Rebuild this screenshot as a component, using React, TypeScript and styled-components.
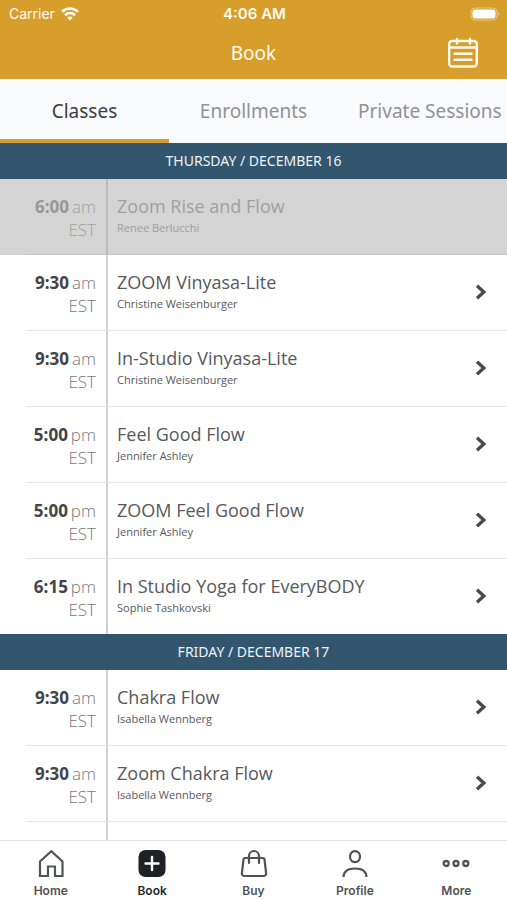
import React from "react";
import styled, { createGlobalStyle } from "styled-components";

const GlobalStyle = createGlobalStyle`
  *, *::before, *::after { box-sizing: border-box; }
  body { margin: 0; background: #fff; font-family: "Open Sans", "Noto Sans", sans-serif; }
  button { font: inherit; color: inherit; background: none; border: 0; padding: 0; cursor: pointer; }
  h1, h2, h3, p, ul { margin: 0; padding: 0; font-weight: 400; list-style: none; }
`;

const Screen = styled.div`
  display: flex;
  flex-direction: column;
  height: 100vh;
  overflow: hidden;
`;

const Header = styled.header`
  flex: none;
  background: #d89e2b;
  color: #fffaf0;
`;

const StatusBar = styled.div`
  display: grid;
  grid-template-columns: 1fr auto 1fr;
  align-items: center;
  height: 27px;
  padding: 0 7px 0 9px;
  font: 400 14px/20px Inter, "Liberation Sans", sans-serif;
`;

const Carrier = styled.span`
  display: flex;
  align-items: center;
  gap: 6px;
`;

const Clock = styled.span`
  font-size: 15px;
  font-weight: 600;
`;

const Battery = styled.svg`
  justify-self: end;
`;

const TitleBar = styled.div`
  display: grid;
  grid-template-columns: 1fr auto 1fr;
  align-items: center;
  height: 52px;
  padding: 0 28px;
`;

const Title = styled.h1`
  grid-column: 2;
  font-family: "Noto Sans", "Open Sans", sans-serif;
  font-size: 19px;
  line-height: 26px;
`;

const CalendarButton = styled.button`
  justify-self: end;
  display: flex;
`;

const Tabs = styled.div`
  flex: none;
  display: flex;
  overflow: hidden;
  background: #f9fafc;
`;

const Tab = styled.button<{ $active: boolean }>`
  && {
    flex: none;
    min-width: calc(100% / 3);
    height: 64px;
    padding: 4px 20px 0;
    border-bottom: 4px solid ${(p) => (p.$active ? "#d89e2b" : "transparent")};
    color: ${(p) => (p.$active ? "#3c3d40" : "#909297")};
    font-family: "Noto Sans", "Open Sans", sans-serif;
    font-size: 19px;
    line-height: 26px;
    white-space: nowrap;
  }
`;

const Schedule = styled.main`
  flex: 1;
  min-height: 0;
  overflow-y: auto;
  scrollbar-width: none;
`;

const DayHeading = styled.h2`
  display: flex;
  align-items: center;
  justify-content: center;
  height: 36px;
  background: #33566f;
  color: #edf3f8;
  font-family: "Noto Sans", "Open Sans", sans-serif;
  font-size: 14px;
  line-height: 20px;
  text-transform: uppercase;
`;

const ClassItem = styled.li<{ $past: boolean }>`
  padding-left: 26px;
  background: ${(p) => (p.$past ? "#d4d4d4" : "#fff")};
  color: ${(p) => (p.$past ? "#a0a0a0" : "#58595c")};
`;

const ClassButton = styled.button<{ $last: boolean }>`
  && {
    display: flex;
    width: 100%;
    height: ${(p) => (p.$last ? 75 : 76)}px;
    border-bottom: ${(p) => (p.$last ? 0 : 1)}px solid #e6e6e8;
    text-align: left;
  }
  &&:disabled { border-color: #c8c8c8; cursor: default; }
`;

const Time = styled.span<{ $past: boolean }>`
  flex: none;
  width: 82px;
  align-self: stretch;
  padding: 16px 10px 0 0;
  border-right: 2px solid ${(p) => (p.$past ? "#bcbcbc" : "#d0d0d2")};
  color: ${(p) => (p.$past ? "#a0a0a0" : "#77787b")};
  font-size: 17px;
  font-weight: 300;
  line-height: 23px;
  text-align: right;
`;

const Hour = styled.strong<{ $past: boolean }>`
  margin-right: 3px;
  color: ${(p) => (p.$past ? "#989898" : "#434447")};
  font-weight: 700;
`;

const Info = styled.span`
  flex: 1;
  min-width: 0;
  display: flex;
  flex-direction: column;
  padding: 15px 9px 0;
`;

const ClassName = styled.span`
  font-size: 18px;
  line-height: 25px;
`;

const Teacher = styled.span`
  font-size: 11px;
  line-height: 18px;
`;

const Chevron = styled.svg`
  flex: none;
  align-self: center;
  margin: 0 20px 2px 0;
`;

const NavBar = styled.nav`
  flex: none;
  display: flex;
  height: 60px;
  border-top: 1px solid #e2e3e5;
  background: #fff;
`;

const NavButton = styled.button<{ $active: boolean }>`
  && {
    flex: 1;
    display: flex;
    flex-direction: column;
    align-items: center;
    gap: 5px;
    padding-top: 7px;
    color: ${(p) => (p.$active ? "#26282c" : "#505256")};
    font: 600 12px/16px Inter, "Liberation Sans", sans-serif;
  }
`;

type Session = { hour: string; half: "am" | "pm"; name: string; teacher: string; past?: boolean };

const days: { date: string; sessions: Session[] }[] = [
  {
    date: "Thursday / December 16",
    sessions: [
      { hour: "6:00", half: "am", name: "Zoom Rise and Flow", teacher: "Renee Berlucchi", past: true },
      { hour: "9:30", half: "am", name: "ZOOM Vinyasa-Lite", teacher: "Christine Weisenburger" },
      { hour: "9:30", half: "am", name: "In-Studio Vinyasa-Lite", teacher: "Christine Weisenburger" },
      { hour: "5:00", half: "pm", name: "Feel Good Flow", teacher: "Jennifer Ashley" },
      { hour: "5:00", half: "pm", name: "ZOOM Feel Good Flow", teacher: "Jennifer Ashley" },
      { hour: "6:15", half: "pm", name: "In Studio Yoga for EveryBODY", teacher: "Sophie Tashkovski" },
    ],
  },
  {
    date: "Friday / December 17",
    sessions: [
      { hour: "9:30", half: "am", name: "Chakra Flow", teacher: "Isabella Wennberg" },
      { hour: "9:30", half: "am", name: "Zoom Chakra Flow", teacher: "Isabella Wennberg" },
    ],
  },
];

const tabs = ["Classes", "Enrollments", "Private Sessions"];

const stroke = { fill: "none", stroke: "currentColor", strokeWidth: 2.2, strokeLinejoin: "round", strokeLinecap: "round" } as const;

const navItems: { label: string; icon: React.ReactNode }[] = [
  {
    label: "Home",
    icon: <path {...stroke} strokeLinejoin="miter" strokeLinecap="butt" d="M4 13.500 15.300 3.200 26.500 13.500V28H19V18.500H12V28H4Z" />,
  },
  {
    label: "Book",
    icon: (
      <>
        <rect x="1.5" y="2" width="27" height="27" rx="7" fill="#1f2126" />
        <path d="M15 9v13M8.500 15.500h13" stroke="#fff" strokeWidth="2.400" strokeLinecap="round" />
      </>
    ),
  },
  {
    label: "Buy",
    icon: (
      <path {...stroke} d="M6 10h18a1.500 1.500 0 0 1 1.500 1.300l1.600 13.700a2.500 2.500 0 0 1-2.500 3H5.400a2.500 2.500 0 0 1-2.500-3l1.600-13.700A1.500 1.500 0 0 1 6 10ZM10 15V8a5 5 0 0 1 10 0v7" />
    ),
  },
  {
    label: "Profile",
    icon: <path {...stroke} strokeLinecap="butt" d="M15 3.200c3 0 5 2.300 5 5.400s-2 5.600-5 5.600-5-2.500-5-5.600 2-5.400 5-5.400ZM3.500 29c.3-5.500 4.500-8.500 11.500-8.500S26.200 23.500 26.500 29" />,
  },
  {
    label: "More",
    icon: (
      <g fill="none" stroke="currentColor" strokeWidth="2.300">
        <circle cx="5.200" cy="15.500" r="2.500" />
        <circle cx="15" cy="15.500" r="2.500" />
        <circle cx="24.800" cy="15.500" r="2.500" />
      </g>
    ),
  },
];

export default function App() {
  return (
    <>
      <GlobalStyle />
      <Screen>
        <Header>
          <StatusBar>
            <Carrier>
              Carrier
              <svg width="18" height="14" viewBox="0 0 18 14" fill="none" stroke="#fffdf8" strokeWidth="2.6" aria-hidden="true">
                <path d="M1 4.800C5.600.3 12.400.3 17 4.800" />
                <path d="M4 8.200c2.900-2.800 7.100-2.800 10 0" />
                <path d="M9 13.500 6.200 10.700c1.700-1.500 3.900-1.500 5.600 0Z" fill="#fffdf8" stroke="none" />
              </svg>
            </Carrier>
            <Clock>4:06 AM</Clock>
            <Battery width="30" height="14" viewBox="0 0 30 14" aria-hidden="true">
              <rect x="1" y="1" width="26" height="12" rx="4" fill="none" stroke="#e8c684" />
              <rect x="2.500" y="2.500" width="23" height="9" rx="2.500" fill="#fff" />
              <path d="M28.500 5v4c1.300-.8 1.300-3.200 0-4Z" fill="#ecd09a" />
            </Battery>
          </StatusBar>
          <TitleBar>
            <Title>Book</Title>
            <CalendarButton aria-label="Choose a date">
              <svg width="32" height="32" viewBox="0 0 32 32" fill="none" stroke="#fffaf0" strokeWidth="2.400" strokeLinecap="round" aria-hidden="true">
                <rect x="2.200" y="4" width="27.600" height="25.500" rx="3" />
                <path d="M2 10.500h28M7.500 16.800h17M7.500 22.800h17" />
                <path d="M10 2v4.500M23 2v4.500" />
              </svg>
            </CalendarButton>
          </TitleBar>
        </Header>
        <Tabs role="tablist">
          {tabs.map((label, i) => (
            <Tab key={label} role="tab" aria-selected={i === 0} $active={i === 0}>
              {label}
            </Tab>
          ))}
        </Tabs>
        <Schedule>
          {days.map((day, d) => (
            <section key={day.date}>
              <DayHeading>{day.date}</DayHeading>
              <ul>
                {day.sessions.map((s, i) => {
                  const past = !!s.past;
                  return (
                    <ClassItem key={i} $past={past}>
                      <ClassButton disabled={past} $last={d < days.length - 1 && i === day.sessions.length - 1}>
                        <Time $past={past}>
                          <Hour $past={past}>{s.hour}</Hour>
                          {s.half}
                          <br />
                          EST
                        </Time>
                        <Info>
                          <ClassName>{s.name}</ClassName>
                          <Teacher>{s.teacher}</Teacher>
                        </Info>
                        {!past && (
                          <Chevron width="12" height="18" viewBox="0 0 12 18" fill="none" stroke="#4a4b4e" strokeWidth="3.400" aria-hidden="true">
                            <path d="M2 2.800 8.800 9 2 15.200" />
                          </Chevron>
                        )}
                      </ClassButton>
                    </ClassItem>
                  );
                })}
                {d === days.length - 1 && (
                  <ClassItem $past={false} aria-hidden="true">
                    <ClassButton as="div" $last={false}>
                      <Time $past={false} />
                    </ClassButton>
                  </ClassItem>
                )}
              </ul>
            </section>
          ))}
        </Schedule>
        <NavBar aria-label="Main">
          {navItems.map((item) => (
            <NavButton key={item.label} $active={item.label === "Book"} aria-current={item.label === "Book" ? "page" : undefined}>
              <svg width="30" height="30" viewBox="0 0 30 30" aria-hidden="true">
                {item.icon}
              </svg>
              {item.label}
            </NavButton>
          ))}
        </NavBar>
      </Screen>
    </>
  );
}
